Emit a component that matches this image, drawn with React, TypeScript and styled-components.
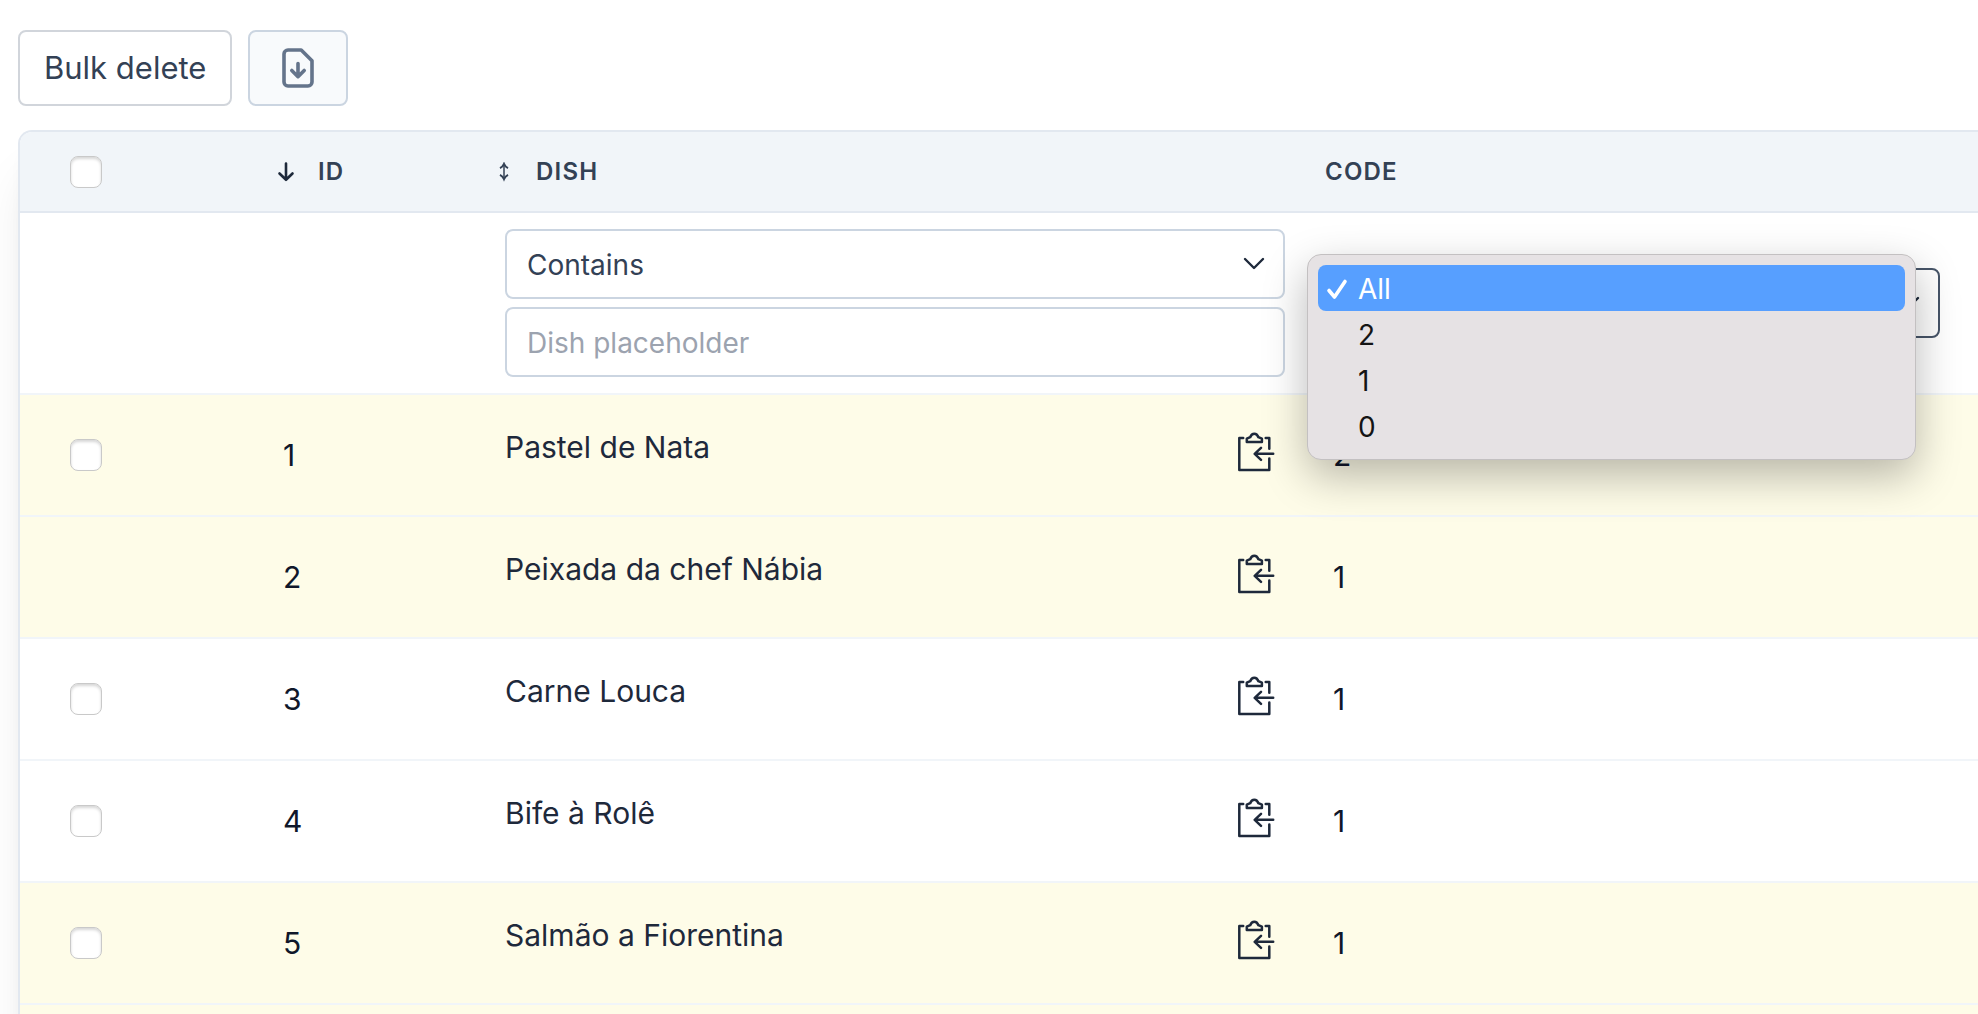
import React, { useState } from "react";
import styled, { createGlobalStyle, css } from "styled-components";

const GlobalStyle = createGlobalStyle`
  *, *::before, *::after { box-sizing: border-box; }
  body {
    margin: 0;
    background: #ffffff;
    color: #1e293b;
    font-family: Inter, "Liberation Sans", sans-serif;
    font-size: 30px;
    line-height: 34px;
  }
  button, input, select { font: inherit; color: inherit; margin: 0; }
`;

const Page = styled.main`
  height: 100vh;
  overflow: hidden;
  padding: 30px 0 0 18px;
  display: flex;
  flex-direction: column;
  gap: 24px;
`;

const Toolbar = styled.div`
  display: flex;
  gap: 16px;
`;

const ToolButton = styled.button<{ $tinted?: boolean }>`
  display: flex;
  align-items: center;
  justify-content: center;
  height: 76px;
  padding: 0 ${(p) => (p.$tinted ? 32 : 24)}px;
  border: 2px solid ${(p) => (p.$tinted ? "#cbd5e1" : "#d1d5db")};
  border-radius: 8px;
  background: ${(p) => (p.$tinted ? "#f8fafc" : "#ffffff")};
  color: ${(p) => (p.$tinted ? "#64748b" : "#334155")};
  font-size: 31px;
  cursor: pointer;
`;

const Card = styled.div`
  border: 2px solid #e2e8f0;
  border-right: 0;
  border-radius: 14px 0 0 0;
  box-shadow: 0 40px 50px -10px rgba(0, 0, 0, 0.1), 0 16px 20px -12px rgba(0, 0, 0, 0.1);
`;

const Table = styled.table`
  width: 100%;
  table-layout: fixed;
  border-collapse: separate;
  border-spacing: 0;
`;

const Col = styled.col<{ $width?: number }>`
  width: ${(p) => (p.$width ? `${p.$width}px` : "auto")};
`;

const HeadCell = styled.th<{ $sortable?: boolean; $check?: boolean }>`
  height: 81px;
  padding: 0 20px 0 ${(p) => (p.$check ? 50 : p.$sortable ? 10 : 20)}px;
  border-bottom: 2px solid #e2e8f0;
  background: #f1f5f9;
  color: #334155;
  font-size: 24px;
  line-height: 32px;
  font-weight: 600;
  letter-spacing: 0.05em;
  text-align: left;
  text-transform: uppercase;
  &:first-child { border-top-left-radius: 12px; }
`;

const SortButton = styled.button`
  display: flex;
  align-items: center;
  gap: 23px;
  padding: 0;
  border: 0;
  background: none;
  letter-spacing: inherit;
  text-transform: inherit;
  cursor: pointer;
`;

const FilterCell = styled.td`
  height: 182px;
  padding: 16px 20px;
  border-bottom: 2px solid #f1f5f9;
  background: #ffffff;
`;

const FilterStack = styled.div`
  display: flex;
  flex-direction: column;
  gap: 8px;
`;

const fieldStyle = css`
  display: block;
  width: 100%;
  height: 70px;
  padding: 2px 20px 0;
  border: 2px solid #cbd5e1;
  border-radius: 8px;
  background: #ffffff;
  color: #334155;
  font-size: 28px;
  line-height: 40px;
  outline: none;
`;

const SelectBox = styled.div<{ $wide?: boolean }>`
  position: relative;
  margin-right: ${(p) => (p.$wide ? 18 : 0)}px;
`;

const Select = styled.select<{ $active?: boolean }>`
  ${fieldStyle}
  appearance: none;
  border-color: ${(p) => (p.$active ? "#475569" : "#cbd5e1")};
`;

const TextField = styled.input`
  ${fieldStyle}
  &::placeholder { color: #9ca3af; opacity: 1; }
`;

const Chevron = styled.svg`
  position: absolute;
  right: 20px;
  top: 28px;
  pointer-events: none;
`;

const Menu = styled.ul`
  position: absolute;
  z-index: 2;
  top: -14px;
  left: -18px;
  right: 24px;
  margin: 0;
  padding: 10px;
  list-style: none;
  border: 1px solid #c3c0c1;
  border-radius: 14px;
  background: #e6e2e4;
  box-shadow: 0 16px 44px rgba(0, 0, 0, 0.28);
`;

const MenuItem = styled.li<{ $selected: boolean }>`
  display: flex;
  align-items: center;
  height: 46px;
  padding: 2px 8px 0;
  border-radius: 8px;
  font-size: 28px;
  line-height: 40px;
  background: ${(p) => (p.$selected ? "#579fff" : "transparent")};
  color: ${(p) => (p.$selected ? "#ffffff" : "#141414")};
  cursor: default;
`;

const CheckSlot = styled.span`
  display: flex;
  width: 32px;
`;

const Checkbox = styled.input`
  appearance: none;
  display: block;
  width: 32px;
  height: 32px;
  border: 1px solid #c9c9c9;
  border-radius: 8px;
  background: #ffffff;
  box-shadow: inset 0 2px 3px rgba(0, 0, 0, 0.16);
  &:checked { background: #579fff; }
`;

const Row = styled.tr<{ $highlight: boolean }>`
  background: ${(p) => (p.$highlight ? "#fefce8" : "#ffffff")};
`;

const Cell = styled.td<{ $left?: number }>`
  height: 122px;
  padding: 0 20px 0 ${(p) => p.$left ?? 20}px;
  border-bottom: 2px solid #f1f5f9;
  color: #0f172a;
`;

const DishContent = styled.div`
  display: flex;
  align-items: flex-start;
  justify-content: space-between;
  height: 50px;
  color: #1e293b;
`;

const CopyButton = styled.button`
  display: flex;
  padding: 2px 10px 0;
  border: 0;
  background: none;
  cursor: pointer;
`;

const Spacer = styled.div`
  height: 48px;
`;

const ExportIcon = () => (
  <svg width="32" height="40" viewBox="0 0 32 40" fill="none" stroke="currentColor" strokeWidth="3.6" strokeLinecap="round" strokeLinejoin="round" aria-hidden="true">
    <path d="M6 2h13.2L30 12.8V34a4 4 0 0 1-4 4H6a4 4 0 0 1-4-4V6a4 4 0 0 1 4-4z" />
    <path d="M16 15.500v13M9.800 22.500l6.200 6.200 6.200-6.200" />
  </svg>
);

const SortDownIcon = () => (
  <svg width="18" height="20" viewBox="0 0 18 20" fill="none" stroke="#1e293b" strokeWidth="2.6" strokeLinecap="round" strokeLinejoin="round" aria-hidden="true">
    <path d="M9 1.500v16M2.500 11.500L9 17.800l6.500-6.300" />
  </svg>
);

const SortBothIcon = () => (
  <svg width="18" height="20" viewBox="0 0 18 20" fill="none" stroke="#334155" aria-hidden="true">
    <path d="M9 3v13" strokeWidth="1.500" />
    <path d="M5 6.200C7 5.200 8.200 3.600 9 1.800c.8 1.800 2 3.400 4 4.400M5 12.800c2 1 3.200 2.600 4 4.400.8-1.800 2-3.400 4-4.400" strokeWidth="2" />
  </svg>
);

const ChevronIcon = () => (
  <Chevron width="22" height="14" viewBox="0 0 22 14" fill="none" stroke="#1e293b" strokeWidth="2.400" strokeLinecap="round" strokeLinejoin="round" aria-hidden="true">
    <path d="M2 2l9 9 9-9" />
  </Chevron>
);

const CheckIcon = () => (
  <svg width="22" height="22" viewBox="0 0 22 22" fill="none" stroke="currentColor" strokeWidth="3.600" strokeLinecap="round" strokeLinejoin="round" aria-hidden="true">
    <path d="M3 12.500l5.500 6.500L19 3.500" />
  </svg>
);

const PasteIcon = () => (
  <svg width="38" height="40" viewBox="0 0 38 40" fill="none" stroke="currentColor" strokeWidth="2.500" strokeLinecap="round" strokeLinejoin="round" aria-hidden="true">
    <path d="M6.200 6H2.300v32h30V26.500M28.700 6h3.600v10.800" />
    <path d="M9.800 10V6.700l3.400-1.500C14 3 15.300 1.800 17.300 1.800s3.300 1.200 4.100 3.400l3.500 1.500V10z" />
    <path d="M36.200 21.800H18M24 15.800l-6.300 6L24 27.800" />
  </svg>
);

type Dish = { id: number; name: string; code: number; highlight: boolean; selectable: boolean };

const dishes: Dish[] = [
  { id: 1, name: "Pastel de Nata", code: 2, highlight: true, selectable: true },
  { id: 2, name: "Peixada da chef Nábia", code: 1, highlight: true, selectable: false },
  { id: 3, name: "Carne Louca", code: 1, highlight: false, selectable: true },
  { id: 4, name: "Bife à Rolê", code: 1, highlight: false, selectable: true },
  { id: 5, name: "Salmão a Fiorentina", code: 1, highlight: true, selectable: true },
];

const codeOptions = ["All", "2", "1", "0"];

export default function App() {
  const [code, setCode] = useState("All");

  return (
    <>
      <GlobalStyle />
      <Page>
        <Toolbar>
          <ToolButton type="button">Bulk delete</ToolButton>
          <ToolButton type="button" $tinted aria-label="Export">
            <ExportIcon />
          </ToolButton>
        </Toolbar>
        <Card>
          <Table>
            <colgroup>
              <Col $width={247} />
              <Col $width={218} />
              <Col $width={820} />
              <Col />
            </colgroup>
            <thead>
              <tr>
                <HeadCell $check>
                  <Checkbox type="checkbox" aria-label="Select all" />
                </HeadCell>
                <HeadCell $sortable>
                  <SortButton type="button">
                    <SortDownIcon />
                    ID
                  </SortButton>
                </HeadCell>
                <HeadCell $sortable>
                  <SortButton type="button">
                    <SortBothIcon />
                    Dish
                  </SortButton>
                </HeadCell>
                <HeadCell>Code</HeadCell>
              </tr>
            </thead>
            <tbody>
              <tr>
                <FilterCell />
                <FilterCell />
                <FilterCell>
                  <FilterStack>
                    <SelectBox>
                      <Select aria-label="Dish filter mode" defaultValue="contains">
                        <option value="contains">Contains</option>
                      </Select>
                      <ChevronIcon />
                    </SelectBox>
                    <TextField type="text" aria-label="Dish" placeholder="Dish placeholder" />
                  </FilterStack>
                </FilterCell>
                <FilterCell>
                  <SelectBox $wide>
                    <Select $active aria-label="Code" value={code} onChange={(e) => setCode(e.target.value)}>
                      {codeOptions.map((o) => (
                        <option key={o}>{o}</option>
                      ))}
                    </Select>
                    <ChevronIcon />
                    <Menu role="listbox" aria-label="Code options">
                      {codeOptions.map((o) => (
                        <MenuItem key={o} role="option" aria-selected={o === code} $selected={o === code} onClick={() => setCode(o)}>
                          <CheckSlot>{o === code && <CheckIcon />}</CheckSlot>
                          {o}
                        </MenuItem>
                      ))}
                    </Menu>
                  </SelectBox>
                </FilterCell>
              </tr>
              {dishes.map((d) => (
                <Row key={d.id} $highlight={d.highlight}>
                  <Cell $left={50}>
                    {d.selectable && <Checkbox type="checkbox" aria-label={`Select ${d.name}`} />}
                  </Cell>
                  <Cell $left={16}>{d.id}</Cell>
                  <Cell>
                    <DishContent>
                      {d.name}
                      <CopyButton type="button" aria-label={`Copy ${d.name}`}>
                        <PasteIcon />
                      </CopyButton>
                    </DishContent>
                  </Cell>
                  <Cell $left={28}>{d.code}</Cell>
                </Row>
              ))}
              <Row $highlight>
                <Cell colSpan={4}>
                  <Spacer />
                </Cell>
              </Row>
            </tbody>
          </Table>
        </Card>
      </Page>
    </>
  );
}
